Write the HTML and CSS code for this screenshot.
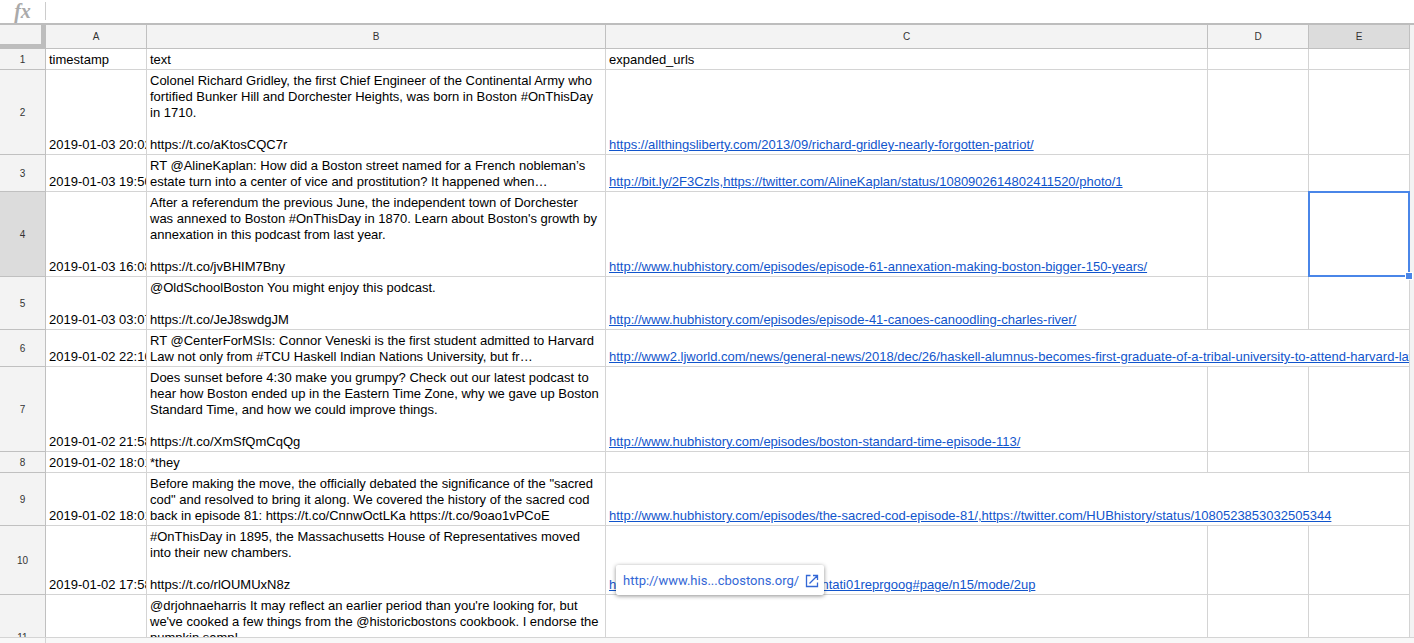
FILE: index.html
```html
<!DOCTYPE html>
<html lang="en">
<head>
<meta charset="utf-8">
<title>Tweet archive</title>
<link rel="stylesheet" href="styles.css">
</head>
<body>
<div class="formula-bar">
  <label class="fx" for="formula">fx</label>
  <input class="formula-input" id="formula" type="text">
</div>
<main class="grid">
  <table class="sheet">
    <colgroup>
      <col class="col-head"><col class="col-a"><col class="col-b"><col class="col-c"><col class="col-d"><col class="col-e">
    </colgroup>
    <thead>
      <tr><td class="corner"></td><th scope="col">A</th><th scope="col">B</th><th scope="col">C</th><th scope="col">D</th><th scope="col" class="active">E</th></tr>
    </thead>
    <tbody>
      <tr><th scope="row">1</th><td>timestamp</td><td>text</td><td>expanded_urls</td><td></td><td></td></tr>
      <tr><th scope="row">2</th><td>2019-01-03 20:02</td><td>Colonel Richard Gridley, the first Chief Engineer of the Continental Army who<br>fortified Bunker Hill and Dorchester Heights, was born in Boston #OnThisDay<br>in 1710.<br><br>https://t.co/aKtosCQC7r</td><td><a href="#">https://allthingsliberty.com/2013/09/richard-gridley-nearly-forgotten-patriot/</a></td><td></td><td></td></tr>
      <tr><th scope="row">3</th><td>2019-01-03 19:50</td><td>RT @AlineKaplan: How did a Boston street named for a French nobleman’s<br>estate turn into a center of vice and prostitution? It happened when…</td><td><a href="#">http://bit.ly/2F3Czls,https://twitter.com/AlineKaplan/status/1080902614802411520/photo/1</a></td><td></td><td></td></tr>
      <tr><th scope="row" class="active">4</th><td>2019-01-03 16:08</td><td>After a referendum the previous June, the independent town of Dorchester<br>was annexed to Boston #OnThisDay in 1870. Learn about Boston's growth by<br>annexation in this podcast from last year.<br><br>https://t.co/jvBHIM7Bny</td><td><a href="#">http://www.hubhistory.com/episodes/episode-61-annexation-making-boston-bigger-150-years/</a></td><td></td><td class="anchor"><div class="selection"><span class="handle"></span></div></td></tr>
      <tr><th scope="row">5</th><td>2019-01-03 03:07</td><td>@OldSchoolBoston You might enjoy this podcast.<br><br>https://t.co/JeJ8swdgJM</td><td><a href="#">http://www.hubhistory.com/episodes/episode-41-canoes-canoodling-charles-river/</a></td><td></td><td></td></tr>
      <tr><th scope="row">6</th><td>2019-01-02 22:10</td><td>RT @CenterForMSIs: Connor Veneski is the first student admitted to Harvard<br>Law not only from #TCU Haskell Indian Nations University, but fr…</td><td colspan="3"><a href="#">http://www2.ljworld.com/news/general-news/2018/dec/26/haskell-alumnus-becomes-first-graduate-of-a-tribal-university-to-attend-harvard-law/</a></td></tr>
      <tr><th scope="row">7</th><td>2019-01-02 21:58</td><td>Does sunset before 4:30 make you grumpy? Check out our latest podcast to<br>hear how Boston ended up in the Eastern Time Zone, why we gave up Boston<br>Standard Time, and how we could improve things.<br><br>https://t.co/XmSfQmCqQg</td><td><a href="#">http://www.hubhistory.com/episodes/boston-standard-time-episode-113/</a></td><td></td><td></td></tr>
      <tr><th scope="row">8</th><td>2019-01-02 18:01</td><td>*they</td><td></td><td></td><td></td></tr>
      <tr><th scope="row">9</th><td>2019-01-02 18:01</td><td>Before making the move, the officially debated the significance of the "sacred<br>cod" and resolved to bring it along. We covered the history of the sacred cod<br>back in episode 81: https://t.co/CnnwOctLKa https://t.co/9oao1vPCoE</td><td colspan="3"><a href="#">http://www.hubhistory.com/episodes/the-sacred-cod-episode-81/,https://twitter.com/HUBhistory/status/1080523853032505344</a></td></tr>
      <tr><th scope="row">10</th><td>2019-01-02 17:58</td><td>#OnThisDay in 1895, the Massachusetts House of Representatives moved<br>into their new chambers.<br><br>https://t.co/rlOUMUxN8z</td><td class="anchor"><a href="#">https://archive.org/stream/therepresentati01reprgoog#page/n15/mode/2up</a>
        <div class="link-card"><a href="#">http://www.his...cbostons.org/<svg class="open-icon" viewBox="0 0 14 14" aria-hidden="true"><path d="M5.5 1.5H1.5v11h11V8.500M8 1.500h4.500V6M12.500 1.500L4.500 9.500"/></svg></a></div></td><td></td><td></td></tr>
      <tr class="tall"><th scope="row">11</th><td></td><td>@drjohnaeharris It may reflect an earlier period than you're looking for, but<br>we've cooked a few things from the @historicbostons cookbook. I endorse the<br>pumpkin samp!</td><td></td><td></td><td></td></tr>
    </tbody>
  </table>
</main>
<footer class="frozen-foot"></footer>
</body>
</html>
```
FILE: styles.css
```css
* { box-sizing: border-box; }
body {
  margin: 0;
  height: 100vh;
  display: flex;
  flex-direction: column;
  overflow: hidden;
  background: #fff;
  color: #000;
  font: 13px/16px "Liberation Sans", Arial, sans-serif;
}
.formula-bar {
  flex: none;
  display: flex;
  align-items: center;
  height: 23px;
  padding: 0 0 1px;
}
.fx {
  width: 45px;
  text-align: center;
  font: italic bold 20px/20px "Liberation Serif", serif;
  color: #aaa;
}
.formula-input {
  flex: 1;
  height: 18px;
  border: 0;
  border-left: 1px solid #ccc;
  padding: 0 4px;
  outline: 0;
  font: inherit;
}
.grid {
  flex: 1;
  min-height: 0;
  overflow: hidden;
  border-top: 2px solid #bdbdbd;
  padding-right: 4px;
  background: #f3f3f3;
}
.sheet {
  width: 100%;
  table-layout: fixed;
  border-collapse: separate;
  border-spacing: 0;
  background: #fff;
}
.col-head { width: 46px; }
.col-a, .col-d, .col-e { width: 101px; }
.col-b { width: 459px; }
td, th {
  border: solid #d4d4d4;
  border-width: 0 1px 1px 0;
}
td {
  padding: 3px 3px 1px;
  vertical-align: bottom;
  white-space: nowrap;
  overflow: hidden;
}
th {
  padding: 2px 0 0;
  background: #f3f3f3;
  border-color: #c0c0c0;
  color: #333;
  font-size: 10px;
  font-weight: 400;
}
thead th {
  height: 24px;
  padding: 0;
}
th.active { background: #dcdcdc; }
.corner {
  background: #f3f3f3;
  border-color: #bdbdbd;
  border-width: 0 5px 5px 0;
}
.tall { height: 85px; }
.tall td { vertical-align: top; }
a { color: #15c; text-decoration: underline; }
.anchor { position: relative; overflow: visible; }
.selection {
  position: absolute;
  inset: -1px;
  border: 2px solid #4a86e8;
}
.handle {
  position: absolute;
  right: -5px;
  bottom: -5px;
  width: 8px;
  height: 8px;
  border: 1px solid #fff;
  background: #4a86e8;
}
.link-card {
  position: absolute;
  left: 10px;
  bottom: -1px;
  height: 30px;
  padding: 1px 5px 0 7px;
  background: #fff;
  border-radius: 2px;
  box-shadow: 0 1px 4px rgba(0, 0, 0, 0.45);
}
.link-card a {
  display: flex;
  align-items: center;
  gap: 6px;
  height: 30px;
  font-family: Roboto, sans-serif;
  color: #3367d6;
  text-decoration: none;
}
.open-icon {
  width: 14px;
  height: 14px;
  fill: none;
  stroke: #3367d6;
  stroke-width: 1.3;
}
.frozen-foot {
  flex: none;
  height: 6px;
  border-top: 1px solid #d4d4d4;
  background: linear-gradient(#d4d4d4, #d4d4d4) 45px 0 / 1px 100% no-repeat #f8f8f8;
}
```
